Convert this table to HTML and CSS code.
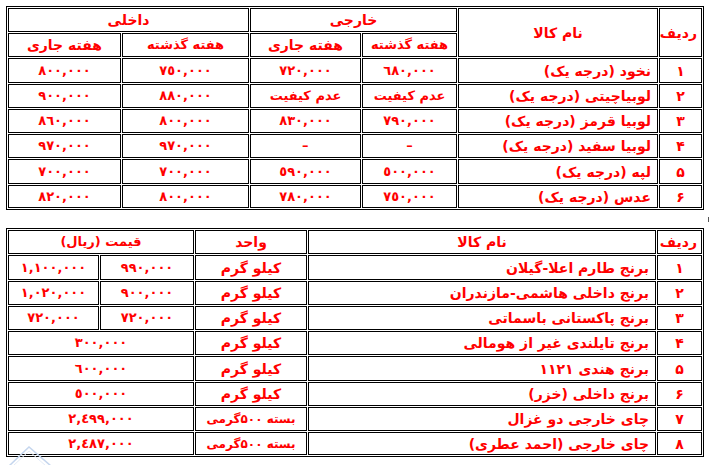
FILE: index.html
```html
<!DOCTYPE html>
<html lang="fa">
<head>
<meta charset="utf-8">
<title>قیمت کالا</title>
<link rel="stylesheet" href="styles.css">
</head>
<body>
<div class="page">
  <table class="grid t1" dir="rtl">
    <colgroup>
      <col class="w43"><col class="w200"><col class="w95"><col class="w111"><col class="w127"><col class="w113">
    </colgroup>
    <tr class="r24">
      <th rowspan="2">ردیف</th>
      <th rowspan="2">نام کالا</th>
      <th colspan="2">خارجی</th>
      <th colspan="2">داخلی</th>
    </tr>
    <tr class="r24">
      <th class="small">هفته گذشته</th><th>هفته جاری</th><th class="small">هفته گذشته</th><th>هفته جاری</th>
    </tr>
    <tr class="r25"><td>۱</td><td class="name">نخود (درجه یک)</td><td class="num">٦٨٠,٠٠٠</td><td class="num">٧٢٠,٠٠٠</td><td class="num">٧٥٠,٠٠٠</td><td class="num">٨٠٠,٠٠٠</td></tr>
    <tr class="r24"><td>۲</td><td class="name">لوبیاچیتی (درجه یک)</td><td class="mid">عدم کیفیت</td><td class="mid">عدم کیفیت</td><td class="num">٨٨٠,٠٠٠</td><td class="num">٩٠٠,٠٠٠</td></tr>
    <tr class="r24"><td>۳</td><td class="name">لوبیا قرمز (درجه یک)</td><td class="num">٧٩٠,٠٠٠</td><td class="num">٨٣٠,٠٠٠</td><td class="num">٨٠٠,٠٠٠</td><td class="num">٨٦٠,٠٠٠</td></tr>
    <tr class="r24"><td>۴</td><td class="name">لوبیا سفید (درجه یک)</td><td class="num">–</td><td class="num">–</td><td class="num">٩٧٠,٠٠٠</td><td class="num">٩٧٠,٠٠٠</td></tr>
    <tr class="r25"><td>۵</td><td class="name">لپه (درجه یک)</td><td class="num">٥٠٠,٠٠٠</td><td class="num">٥٩٠,٠٠٠</td><td class="num">٧٠٠,٠٠٠</td><td class="num">٧٠٠,٠٠٠</td></tr>
    <tr class="r23"><td>۶</td><td class="name">عدس (درجه یک)</td><td class="num">٧٥٠,٠٠٠</td><td class="num">٧٨٠,٠٠٠</td><td class="num">٨٠٠,٠٠٠</td><td class="num">٨٢٠,٠٠٠</td></tr>
  </table>

  <div class="gap"><span class="mark"></span></div>

  <table class="grid t2" dir="rtl">
    <colgroup>
      <col class="w45"><col class="w348"><col class="w112"><col class="w94"><col class="w91">
    </colgroup>
    <tr class="r24">
      <th>ردیف</th><th>نام کالا</th><th>واحد</th><th class="small" colspan="2">قیمت (ریال)</th>
    </tr>
    <tr class="r25"><td>۱</td><td class="name">برنج طارم اعلا-گیلان</td><td>کیلو گرم</td><td class="num">٩٩٠,٠٠٠</td><td class="num">١,١٠٠,٠٠٠</td></tr>
    <tr class="r24"><td>۲</td><td class="name">برنج داخلی هاشمی-مازندران</td><td>کیلو گرم</td><td class="num">٩٠٠,٠٠٠</td><td class="num">١,٠٢٠,٠٠٠</td></tr>
    <tr class="r24"><td>۳</td><td class="name">برنج پاکستانی باسماتی</td><td>کیلو گرم</td><td class="num">٧٢٠,٠٠٠</td><td class="num">٧٢٠,٠٠٠</td></tr>
    <tr class="r24"><td>۴</td><td class="name">برنج تایلندی غیر از هومالی</td><td>کیلو گرم</td><td class="num" colspan="2">٣٠٠,٠٠٠</td></tr>
    <tr class="r25"><td>۵</td><td class="name">برنج هندی ۱۱۲۱</td><td>کیلو گرم</td><td class="num" colspan="2">٦٠٠,٠٠٠</td></tr>
    <tr class="r24"><td>۶</td><td class="name">برنج داخلی (خزر)</td><td>کیلو گرم</td><td class="num" colspan="2">٥٠٠,٠٠٠</td></tr>
    <tr class="r24"><td>۷</td><td class="name">چای خارجی دو غزال</td><td class="unit">بسته ۵۰۰گرمی</td><td class="num" colspan="2">٢,٤٩٩,٠٠٠</td></tr>
    <tr class="r23"><td>۸</td><td class="name">چای خارجی (احمد عطری)</td><td class="unit">بسته ۵۰۰گرمی</td><td class="num" colspan="2">٢,٤٨٧,٠٠٠</td></tr>
  </table>
</div>
<svg class="chevron" width="44" height="20" viewBox="0 0 44 20">
  <polyline points="1,20 21,1 43,20" fill="none" stroke="#c5d6ee" stroke-width="1.5"/>
  <polyline points="5,20 21,5 38,20" fill="none" stroke="#e3ebf7" stroke-width="1"/>
</svg>
</body>
</html>
```

FILE: styles.css
```css
html, body {
  margin: 0;
  padding: 0;
  background: #ffffff;
}

body {
  width: 709px;
  height: 465px;
  overflow: hidden;
  position: relative;
  font-family: "DejaVu Sans", "Noto Sans", sans-serif;
}

.page {
  padding: 6px 0 0 6px;
}

.grid {
  width: 698px;
  table-layout: fixed;
  border-collapse: separate;
  border-spacing: 1px;
  border: 1px solid #000;
  color: #ff0000;
  font-size: 14px;
  font-weight: bold;
}

.grid th,
.grid td {
  border: 1px solid #000;
  padding: 0 4px;
  text-align: center;
  vertical-align: middle;
  white-space: nowrap;
  overflow: hidden;
  font-weight: bold;
  line-height: 16px;
}

.grid td.name {
  text-align: right;
  padding-right: 6px;
}

.grid td.num {
  font-size: 13px;
  letter-spacing: 0.3px;
}

.grid td.mid {
  font-size: 13px;
}

.grid .small {
  font-size: 13px;
}

.grid td.unit {
  font-size: 12px;
}

.r23 { height: 23px; }
.r24 { height: 24px; }
.r25 { height: 25px; }

.w43 { width: 43px; }
.w200 { width: 200px; }
.w95 { width: 95px; }
.w111 { width: 111px; }
.w127 { width: 127px; }
.w113 { width: 113px; }

.w45 { width: 45px; }
.w348 { width: 348px; }
.w112 { width: 112px; }
.w94 { width: 94px; }
.w91 { width: 91px; }

.gap {
  height: 18px;
  display: flex;
  justify-content: flex-end;
  align-items: center;
  width: 703px;
}

.mark {
  display: inline-block;
  width: 3px;
  height: 3px;
  border: 1px solid #555;
  margin-right: -4px;
}

.chevron {
  position: absolute;
  left: 8px;
  top: 446px;
}
```
